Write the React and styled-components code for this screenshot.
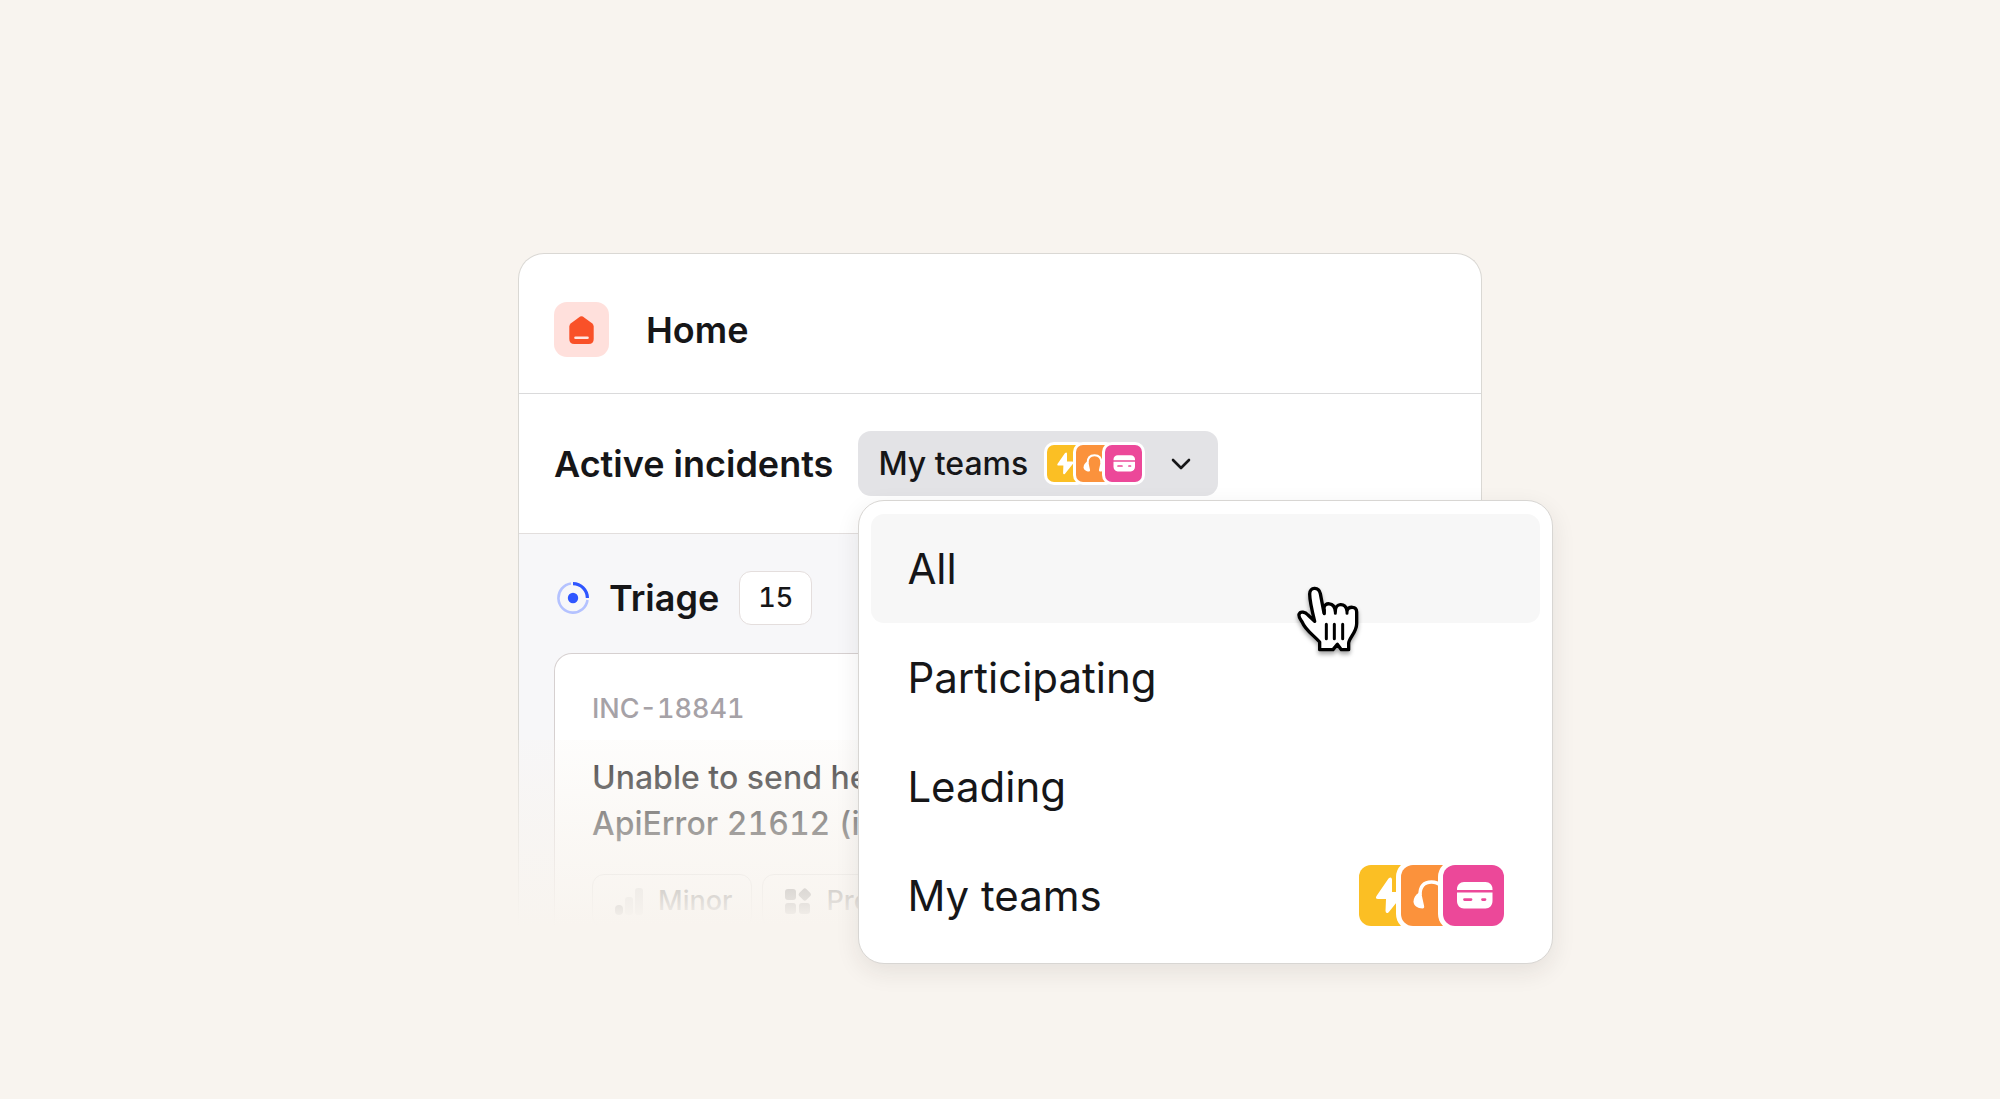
import styled, { createGlobalStyle } from "styled-components"

const teams = ["bolt", "headset", "card"]

const options = [
    {label: "All", active: true},
    {label: "Participating"},
    {label: "Leading"},
    {label: "My teams", teams: true},
]

const TeamIcon = ({name}) => (
    <Tile $name={name} viewBox="0 0 61 61" aria-hidden="true">
        {name === "bolt" && (
            <path fill="#fff" d="M29.500 13.500 17.500 31q-1.600 3 1.500 3H27l-.5 12q.5 3.500 3.200 1.200L43.500 30q1.500-3-2-3H33V14.500q-.5-3.500-3.500-1z" />
        )}
        {name === "headset" && (
            <g fill="#fff">
                <path d="M19 30C19 21 23.500 17 30.500 17S42 21 42 30" fill="none" stroke="#fff" strokeWidth="3.400" />
                <path d="M18 27.500c-3 2-5.500 5-5.500 9 0 4 4 7 9 7 1.500 0 1.900-1 1.600-2.500L20.500 29q-.6-2.400-2.500-1.500z" />
                <path d="M43 27.500c3 2 5.500 5 5.500 9 0 4-4 7-9 7-1.500 0-1.900-1-1.600-2.500L40.500 29q.6-2.400 2.500-1.500z" />
            </g>
        )}
        {name === "card" && (
            <g fill="#fff">
                <path d="M14 25v-1c0-4 3-7 7-7h21.500c4 0 7 3 7 7v1z" />
                <path fillRule="evenodd" d="M14 27.500h35.500V36c0 4.500-3 7.500-7 7.500H21c-4 0-7-3-7-7.500zM21.500 33.200a1.400 1.400 0 0 0 0 2.800H28a1.400 1.400 0 0 0 0-2.800zM39.500 33.200a1.400 1.400 0 0 0 0 2.800H42a1.400 1.400 0 0 0 0-2.800z" />
            </g>
        )}
    </Tile>
)

const TeamStack = ({large}) => (
    <Stack $large={large}>
        {teams.map(name => <TeamIcon key={name} name={name} />)}
    </Stack>
)

const HomeIcon = () => (
    <svg width="25" height="28" viewBox="0 0 25 28" aria-hidden="true">
        <path fill="#f95128" d="M11.200.6q1.300-.9 2.600 0l9.200 6.600q1.700 1.300 1.700 3.400V23q0 5-5 5H5.300q-5 0-5-5V10.600q0-2.100 1.700-3.400z" />
        <path stroke="#ffe5e0" strokeWidth="2.600" strokeLinecap="round" d="M6.500 21.800h12" />
    </svg>
)

const TriageIcon = () => (
    <svg width="32" height="32" viewBox="0 0 32 32" fill="none" aria-hidden="true">
        <path stroke="#b4c2ff" strokeWidth="2.600" d="M30.500 18A14.600 14.600 0 1 1 14 1.540" />
        <path stroke="#2f56ff" strokeWidth="3.200" d="M16 1.600A14.400 14.400 0 0 1 30.400 16" />
        <circle cx="16" cy="16" r="5.200" fill="#2f56ff" />
    </svg>
)

const Chevron = () => (
    <svg width="20" height="12" viewBox="0 0 20 12" fill="none" aria-hidden="true">
        <path stroke="#161618" strokeWidth="2.600" strokeLinecap="round" strokeLinejoin="round" d="m2 2 8 8 8-8" />
    </svg>
)

const SeverityIcon = () => (
    <svg width="28" height="28" viewBox="0 0 28 28" fill="#3c3c40" aria-hidden="true">
        <rect y="18" width="8" height="10" rx="4" />
        <rect x="10" y="10" width="8" height="18" rx="3" opacity=".3" />
        <rect x="20" y="1" width="8" height="27" rx="3" opacity=".3" />
    </svg>
)

const ProductIcon = () => (
    <svg width="26" height="26" viewBox="0 0 26 26" fill="#3c3c40" aria-hidden="true">
        <rect y="1" width="11" height="11" rx="3" />
        <rect x="14.800" y="1.500" width="10" height="10" rx="2.500" transform="rotate(45 19.800 6.500)" />
        <rect y="15" width="11" height="11" rx="3" />
        <rect x="14" y="15" width="11" height="11" rx="3" />
    </svg>
)

const Pointer = () => (
    <PointerSvg width="67" height="72" viewBox="45 69 201 216" aria-hidden="true">
        <path
            fill="#fff"
            stroke="#000"
            strokeWidth="10"
            strokeLinejoin="round"
            d="M119 266v-23C100 222 76 207 67 184C62 175 55 169 57 160C61 149 76 153 84 162L104 181C97 153 89 121 89 99C89 78 116 76 121 98L132 156V142C132 123 163 122 166 150C166 126 195 124 201 148C206 136 230 134 230 153V188C230 214 206 232 206 247V266H184L172 250L159 266Z"
        />
        <path
            fill="none"
            stroke="#000"
            strokeWidth="9"
            strokeLinecap="round"
            d="M133 158v-12M166 157v-8M201 157v-8M139 190v43M163 190v43M188 190v43"
        />
    </PointerSvg>
)

const App = () => {
    return(
        <Page>
            <GlobalStyle />
            <Window>
                <Header>
                    <HomeBadge><HomeIcon /></HomeBadge>
                    <Title>Home</Title>
                </Header>
                <Filters>
                    <Heading id="incidents">Active incidents</Heading>
                    <Picker>
                        <PickerButton type="button" aria-haspopup="menu" aria-expanded="true">
                            My teams
                            <TeamStack />
                            <Chevron />
                        </PickerButton>
                        <Menu role="menu">
                            {options.map(option => (
                                <Option key={option.label} type="button" role="menuitem" $active={option.active}>
                                    {option.label}
                                    {option.teams && <TeamStack large />}
                                </Option>
                            ))}
                            <Pointer />
                        </Menu>
                    </Picker>
                </Filters>
                <Board aria-labelledby="incidents">
                    <ColumnHead>
                        <TriageIcon />
                        <Heading>Triage</Heading>
                        <Count>15</Count>
                    </ColumnHead>
                    <Incident>
                        <Reference>INC-18841</Reference>
                        <Summary>
                            Unable to send he<br />
                            ApiError 21612 (i
                        </Summary>
                        <Chips>
                            <Chip><SeverityIcon />Minor</Chip>
                            <Chip><ProductIcon />Pro</Chip>
                        </Chips>
                    </Incident>
                </Board>
            </Window>
        </Page>
    )
}

const GlobalStyle = createGlobalStyle`
    * {
        box-sizing: border-box;
    }

    body {
        margin: 0;
        background: #f8f4ef;
        color: #161618;
        font-family: Inter, "Liberation Sans", sans-serif;
    }

    button {
        border: 0;
        color: inherit;
        font-family: inherit;
        cursor: pointer;
    }
`

const Page = styled.main`
    min-height: 100vh;
    padding: 253px 24px 140px;
`

const Window = styled.div`
    width: 100%;
    max-width: 964px;
    margin: 0 auto;
    border: solid #dad8d4;
    border-width: 1px 1px 0;
    border-radius: 26px 26px 0 0;
    background: #fff;
`

const Header = styled.header`
    display: flex;
    align-items: center;
    gap: 37px;
    padding: 48px 35px 36px;
    border-bottom: 1px solid #dadadb;
`

const HomeBadge = styled.span`
    display: flex;
    align-items: center;
    justify-content: center;
    width: 55px;
    height: 55px;
    border-radius: 13px;
    background: #ffe0dc;
`

const Title = styled.h1`
    margin: 0;
    font-size: 36px;
    font-weight: 600;
    line-height: 44px;
`

const Heading = styled.h2`
    margin: 0;
    font-size: 36px;
    font-weight: 600;
    line-height: 44px;
`

const Filters = styled.div`
    display: flex;
    align-items: center;
    gap: 25px;
    padding: 37px 35px;
    border-bottom: 1px solid #e2dedd;
`

const Picker = styled.div`
    position: relative;
    z-index: 2;
`

const PickerButton = styled.button`
    display: flex;
    align-items: center;
    height: 65px;
    padding: 0 27px 0 20px;
    gap: 19px;
    border-radius: 13px;
    background: #e3e3e6;
    font-size: 32px;
    font-weight: 500;
    white-space: nowrap;

    > svg {
        margin-left: 10px;
    }
`

const tileColors = {
    bolt: "#fbbf24",
    headset: "#fb923c",
    card: "#ec4899",
}

const Tile = styled.svg`
    flex: none;
    background: ${props => tileColors[props.$name]};
`

const Stack = styled.span`
    display: flex;
    margin-left: ${props => props.$large ? "auto" : "0"};

    ${Tile} {
        width: ${props => props.$large ? "61px" : "37px"};
        height: ${props => props.$large ? "61px" : "37px"};
        border-radius: ${props => props.$large ? "12px" : "7px"};
        box-shadow: 0 0 0 ${props => props.$large ? "5px" : "3px"} #fff;
    }

    ${Tile} + ${Tile} {
        margin-left: ${props => props.$large ? "-19px" : "-8px"};
    }
`

const Menu = styled.div`
    position: absolute;
    top: calc(100% + 4px);
    left: 0;
    width: 695px;
    padding: 13px 12px;
    border: 1px solid #d8d6d3;
    border-radius: 26px;
    background: #fff;
    box-shadow: 0 8px 24px rgba(40, 36, 30, 0.09);
`

const Option = styled.button`
    display: flex;
    align-items: center;
    width: 100%;
    height: 109px;
    padding: 0 36px;
    border-radius: 13px;
    background: ${props => props.$active ? "#f7f7f7" : "transparent"};
    font-size: 42px;
    font-weight: 400;
    text-align: left;
`

const PointerSvg = styled.svg`
    position: absolute;
    top: 83px;
    left: 436px;
    filter: drop-shadow(0 3px 2px rgba(0, 0, 0, 0.35));
    pointer-events: none;
`

const Board = styled.section`
    position: relative;
    padding: 37px 35px 0;
    background: #f7f7f9;

    /* fades the lower half of the board into the page */
    &::after {
        content: "";
        position: absolute;
        inset: auto -1px 0;
        height: 188px;
        background: linear-gradient(
            rgba(248, 244, 239, 0.2),
            rgba(248, 244, 239, 0.58) 83px,
            rgba(248, 244, 239, 0.89) 160px,
            rgba(248, 244, 239, 0.96) 175px,
            #f8f4ef 186px
        );
    }
`

const ColumnHead = styled.div`
    display: flex;
    align-items: center;
    gap: 20px;
    padding-left: 3px;
`

const Count = styled.span`
    padding: 9px 18px;
    border: 1px solid #e4dedd;
    border-radius: 12px;
    background: #fff;
    font-size: 27px;
    font-weight: 500;
    line-height: 34px;
    font-variant-numeric: tabular-nums;
`

const Incident = styled.article`
    margin-top: 28px;
    padding: 36px 37px 0;
    border: solid #d6d0d0;
    border-width: 1px 1px 0;
    border-radius: 18px 18px 0 0;
    background: #fff;
    white-space: nowrap;
`

const Reference = styled.p`
    margin: 0;
    color: #a6a2a7;
    font-size: 27px;
    font-weight: 500;
    line-height: 38px;
    font-variant-numeric: tabular-nums;
`

const Summary = styled.p`
    margin: 27px 0 0;
    font-size: 32px;
    font-weight: 500;
    line-height: 46px;
    font-variant-numeric: tabular-nums;
`

const Chips = styled.div`
    display: flex;
    gap: 10px;
    margin-top: 27px;
`

const Chip = styled.span`
    display: flex;
    align-items: center;
    gap: 15px;
    padding: 10px 19px 10px 22px;
    border: 1px solid #d6d6d6;
    border-radius: 12px;
    font-size: 27px;
    font-weight: 500;
    line-height: 32px;

    /* the cut-off chip runs on to the right, under the menu */
    &:last-child {
        padding-right: 90px;
    }
`

export default App
